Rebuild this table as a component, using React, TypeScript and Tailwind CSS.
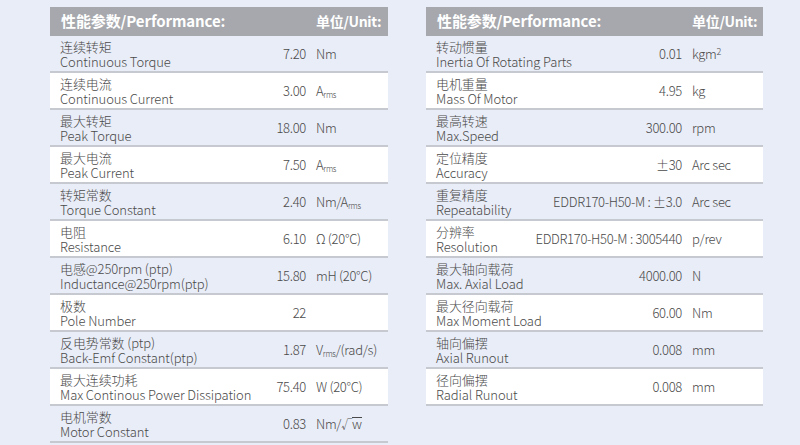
import React from "react";

type Row = { zh: React.ReactNode; en: string; value: React.ReactNode; unit: React.ReactNode };

const Sub = ({ c }: { c: string }) => <span className="text-[8px] align-[-2px]">{c}</span>;

const left: Row[] = [
  { zh: "连续转矩", en: "Continuous Torque", value: "7.20", unit: "Nm" },
  { zh: "连续电流", en: "Continuous Current", value: "3.00", unit: <>A<Sub c="rms" /></> },
  { zh: "最大转矩", en: "Peak Torque", value: "18.00", unit: "Nm" },
  { zh: "最大电流", en: "Peak Current", value: "7.50", unit: <>A<Sub c="rms" /></> },
  { zh: "转矩常数", en: "Torque Constant", value: "2.40", unit: <>Nm/A<Sub c="rms" /></> },
  { zh: "电阻", en: "Resistance", value: "6.10", unit: "Ω (20°C)" },
  { zh: "电感@250rpm (ptp)", en: "Inductance@250rpm(ptp)", value: "15.80", unit: "mH (20°C)" },
  { zh: "极数", en: "Pole Number", value: "22", unit: "" },
  { zh: "反电势常数 (ptp)", en: "Back-Emf Constant(ptp)", value: "1.87", unit: <>V<Sub c="rms" />/(rad/s)</> },
  { zh: "最大连续功耗", en: "Max Continous Power Dissipation", value: "75.40", unit: "W (20°C)" },
  {
    zh: "电机常数",
    en: "Motor Constant",
    value: "0.83",
    unit: (
      <>
        Nm/<span className="text-[11px]">√</span>
        <span className="inline-block border-t border-current leading-[11px] text-[13px]">w</span>
      </>
    ),
  },
];

const right: Row[] = [
  { zh: "转动惯量", en: "Inertia Of Rotating Parts", value: "0.01", unit: <>kgm<span className="text-[9px] align-[4px]">2</span></> },
  { zh: "电机重量", en: "Mass Of Motor", value: "4.95", unit: "kg" },
  { zh: "最高转速", en: "Max.Speed", value: "300.00", unit: "rpm" },
  { zh: "定位精度", en: "Accuracy", value: "±30", unit: "Arc sec" },
  { zh: "重复精度", en: "Repeatability", value: "EDDR170-H50-M : ±3.0", unit: "Arc sec" },
  { zh: "分辨率", en: "Resolution", value: "EDDR170-H50-M : 3005440", unit: "p/rev" },
  { zh: "最大轴向载荷", en: "Max. Axial Load", value: "4000.00", unit: "N" },
  { zh: "最大径向载荷", en: "Max Moment Load", value: "60.00", unit: "Nm" },
  { zh: "轴向偏摆", en: "Axial Runout", value: "0.008", unit: "mm" },
  { zh: "径向偏摆", en: "Radial Runout", value: "0.008", unit: "mm" },
];

function Table({ rows, width, unitW }: { rows: Row[]; width: string; unitW: string }) {
  return (
    <div className={width}>
      <div className="flex h-[29px] items-center bg-[#a6a8ad] text-[15px] font-bold text-white whitespace-nowrap font-['Noto_Sans_CJK_SC','Noto_Sans',sans-serif]">
        <div className="flex-1 pl-[11px] tracking-[-0.1px]">性能参数/Performance:</div>
        <div className={`${unitW} shrink-0 text-[14px] tracking-[-0.3px]`}>单位/Unit:</div>
      </div>
      {rows.map((r, i) => (
        <div
          key={i}
          className={`flex h-[37px] items-center border-b-2 border-[#c6c9d0] ${i % 2 === 1 ? "bg-white" : ""}`}
        >
          <div className="flex-1 min-w-0 pl-[10px] text-[13px] leading-[15px] tracking-[-0.1px] whitespace-nowrap">
            <div>{r.zh}</div>
            <div>{r.en}</div>
          </div>
          <div className="shrink-0 pr-[10px] text-right text-[13px] tracking-[-0.3px] whitespace-nowrap">{r.value}</div>
          <div className={`${unitW} shrink-0 text-[13px] tracking-[-0.3px] whitespace-nowrap`}>{r.unit}</div>
        </div>
      ))}
    </div>
  );
}

export default function App() {
  return (
    <div
      className="w-[800px] h-[445px] overflow-hidden bg-[#e9edf7] text-[#4a4a4a] font-light"
      style={{ fontFamily: '"Noto Sans CJK SC Light", "Noto Sans CJK SC", "Noto Sans", sans-serif' }}
    >
      <div className="flex gap-[38px] pl-[50px] pt-[7px]">
        <Table rows={left} width="w-[338px]" unitW="w-[72px]" />
        <Table rows={right} width="w-[337px]" unitW="w-[71px]" />
      </div>
    </div>
  );
}
